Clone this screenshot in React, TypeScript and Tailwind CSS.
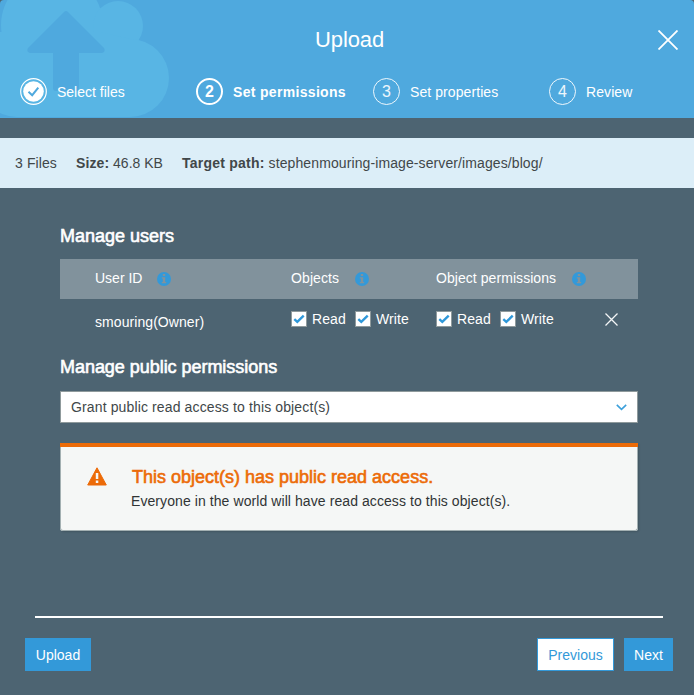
import type { ReactNode } from "react";

function InfoIcon() {
  return (
    <svg width="14" height="14" viewBox="0 0 14 14" className="mt-[2px] shrink-0">
      <circle cx="7" cy="7" r="7" fill="#3399d9" />
      <path d="M5.800 2h2.400v2H5.800zM4.800 5.300h3.400v4.600h1v1.400H4.800V9.900h1V6.600h-1z" fill="#81929c" />
    </svg>
  );
}

function Check({ label, className }: { label: string; className: string }) {
  return (
    <label className={`flex shrink-0 items-center ${className}`}>
      <span className="flex h-4 w-4 shrink-0 items-center justify-center border border-[#8f9a9c] bg-white">
        <svg width="12" height="12" viewBox="0 0 12 12" fill="none" stroke="#2f98d9" strokeWidth="2.4">
          <path d="M1.300 6.200 4.300 8.900 10.700 2.700" />
        </svg>
      </span>
      <span className="ml-[5px] tracking-[0.1px]">{label}</span>
    </label>
  );
}

function Cloud() {
  return (
    <svg width="170" height="118" viewBox="0 0 170 118" className="absolute left-0 top-0">
      <g fill="#58b5e4">
        <circle cx="52" cy="25" r="51" />
        <circle cx="118" cy="26" r="25" />
        <circle cx="130" cy="78" r="39" />
        <circle cx="17" cy="78" r="39" />
        <path d="M0 32H100L130 39V117H17L0 100z" />
      </g>
      <path
        d="M64 12Q66 10 68 12L104 48Q106 52 102 53H79V88Q79 91 76 91H56Q53 91 53 88V53H30Q26 52 28 48z"
        fill="#4fa9de"
      />
    </svg>
  );
}

function Step({ n, label, className, active }: { n: string; label: string; className: string; active?: boolean }) {
  return (
    <div className={`flex shrink-0 items-center ${className}`}>
      <span
        className={`flex h-[27px] w-[27px] shrink-0 items-center justify-center rounded-full text-[16px] leading-none ${
          active ? "border-2 border-white font-bold" : "border border-white/90 text-white/90"
        }`}
      >
        {n}
      </span>
      <span className={active ? "ml-[10px] font-bold tracking-[0.32px]" : "ml-[10px] tracking-[0.08px]"}>{label}</span>
    </div>
  );
}

function Heading({ children, className }: { children: ReactNode; className: string }) {
  return (
    <h2 className={`flex items-center whitespace-nowrap text-[18px] leading-6 [-webkit-text-stroke:0.6px] ${className}`}>
      {children}
    </h2>
  );
}

export default function App() {
  return (
    <div className="h-[695px] w-[694px] overflow-hidden bg-[#4d6472] font-['Liberation_Sans',Arial,sans-serif] text-[14px] leading-5 whitespace-nowrap text-white">
      <header className="relative h-[118px] overflow-hidden rounded-t-[4px] bg-[#4fa9de]">
        <Cloud />
        <div className="relative flex h-[78px] items-center justify-between pr-4 pl-[315px]">
          <h1 className="pt-[2px] text-[22px] leading-7 tracking-[-0.1px]">Upload</h1>
          <svg width="20" height="20" viewBox="0 0 20 20" stroke="white" strokeWidth="1.8" className="mt-[2px]">
            <path d="M.5.5 19.500 19.500M19.500.5.5 19.500" />
          </svg>
        </div>
        <nav className="relative flex h-[27px] items-center pl-5">
          <div className="flex w-44 shrink-0 items-center">
            <svg width="27" height="27" viewBox="0 0 27 27" fill="none">
              <circle cx="13.500" cy="13.500" r="12.800" stroke="white" strokeWidth="1.2" />
              <circle cx="13.500" cy="13.500" r="10.300" fill="white" />
              <path d="M8.500 13.700 12.200 17.200 18.300 9.700" stroke="#4fa9de" strokeWidth="2" />
            </svg>
            <span className="ml-[10px]">Select files</span>
          </div>
          <Step n="2" label="Set permissions" className="w-[177px]" active />
          <Step n="3" label="Set properties" className="w-44" />
          <Step n="4" label="Review" className="w-24" />
        </nav>
      </header>

      <section className="mt-5 flex h-[50px] items-center bg-[#dceef8] pl-[15px] text-[#414749]">
        <span className="w-[61px] tracking-[0.1px]">3 Files</span>
        <span className="w-[106px]">
          <b className="tracking-[0.1px]">Size:</b> 46.8 KB
        </span>
        <span className="tracking-[0.1px]">
          <b className="tracking-[0.23px]">Target path:</b> stephenmouring-image-server/images/blog/
        </span>
      </section>

      <main className="mr-[56px] ml-[60px] h-[428px] pt-9">
        <Heading className="">Manage users</Heading>
        <div className="mt-[11px] flex h-10 items-center bg-[#81929c] pb-[2px] pl-[35px]">
          <div className="flex w-[196px] items-center gap-[15px]">User ID<InfoIcon /></div>
          <div className="flex w-[145px] items-center gap-4 tracking-[0.1px]">Objects<InfoIcon /></div>
          <div className="flex items-center gap-4 tracking-[0.06px]">Object permissions<InfoIcon /></div>
        </div>
        <div className="flex h-10 items-center pl-[35px]">
          <span className="w-[196px] pt-[6px] tracking-[0.07px]">smouring(Owner)</span>
          <Check label="Read" className="w-16" />
          <Check label="Write" className="w-[81px]" />
          <Check label="Read" className="w-16" />
          <Check label="Write" className="w-[105px]" />
          <svg width="13" height="13" viewBox="0 0 13 13" stroke="#f4f6f7" strokeWidth="1.300">
            <path d="M.5.5 12.500 12.500M12.500.5.5 12.500" />
          </svg>
        </div>
        <Heading className="mt-4 tracking-[-0.04px]">Manage public permissions</Heading>
        <div className="mt-3 flex h-8 items-center justify-between border border-[#8f9a9c] bg-white pr-[10px] pl-[10px] text-[#414749]">
          <span className="tracking-[0.13px]">Grant public read access to this object(s)</span>
          <svg width="11" height="7" viewBox="0 0 11 7" fill="none" stroke="#3ca0db" strokeWidth="1.6" className="mt-px">
            <path d="M.8.8 5.500 5.300 10.200.8" />
          </svg>
        </div>
        <div className="mt-5 h-[88px] rounded-b-[3px] bg-[#f5f7f6] shadow-[1px_1px_2px_rgba(0,0,0,0.15)]">
          <div className="h-1 bg-[#ec6b08]" />
          <div className="flex h-[84px] rounded-b-[3px] border border-t-0 border-[#a3b0b2]">
            <svg width="20" height="19" viewBox="0 0 20 19" className="mt-5 ml-[26px] shrink-0">
              <path d="M10 .8 19.300 18H.7z" fill="#ec6b08" stroke="#ec6b08" strokeLinejoin="round" />
              <path d="M8.800 6h2.500v6H8.800zM8.800 13.500h2.500V16H8.800z" fill="#f5f7f6" />
            </svg>
            <div className="ml-6 pt-[18px]">
              <Heading className="ml-px text-[#ec6b08]">This object(s) has public read access.</Heading>
              <p className="mt-[2px] tracking-[0.08px] text-[#303435]">
                Everyone in the world will have read access to this object(s).
              </p>
            </div>
          </div>
        </div>
      </main>

      <footer>
        <div className="mr-[31px] ml-[35px] h-[2px] bg-white" />
        <div className="mt-5 flex pr-[21px] pl-[25px]">
          <button className="h-[33px] w-[66px] bg-[#3399d9]">Upload</button>
          <button className="ml-auto h-[33px] w-[77px] border border-[#3399d9] bg-white text-[#3399d9]">Previous</button>
          <button className="ml-[10px] h-[33px] w-[49px] bg-[#3399d9]">Next</button>
        </div>
      </footer>
    </div>
  );
}
